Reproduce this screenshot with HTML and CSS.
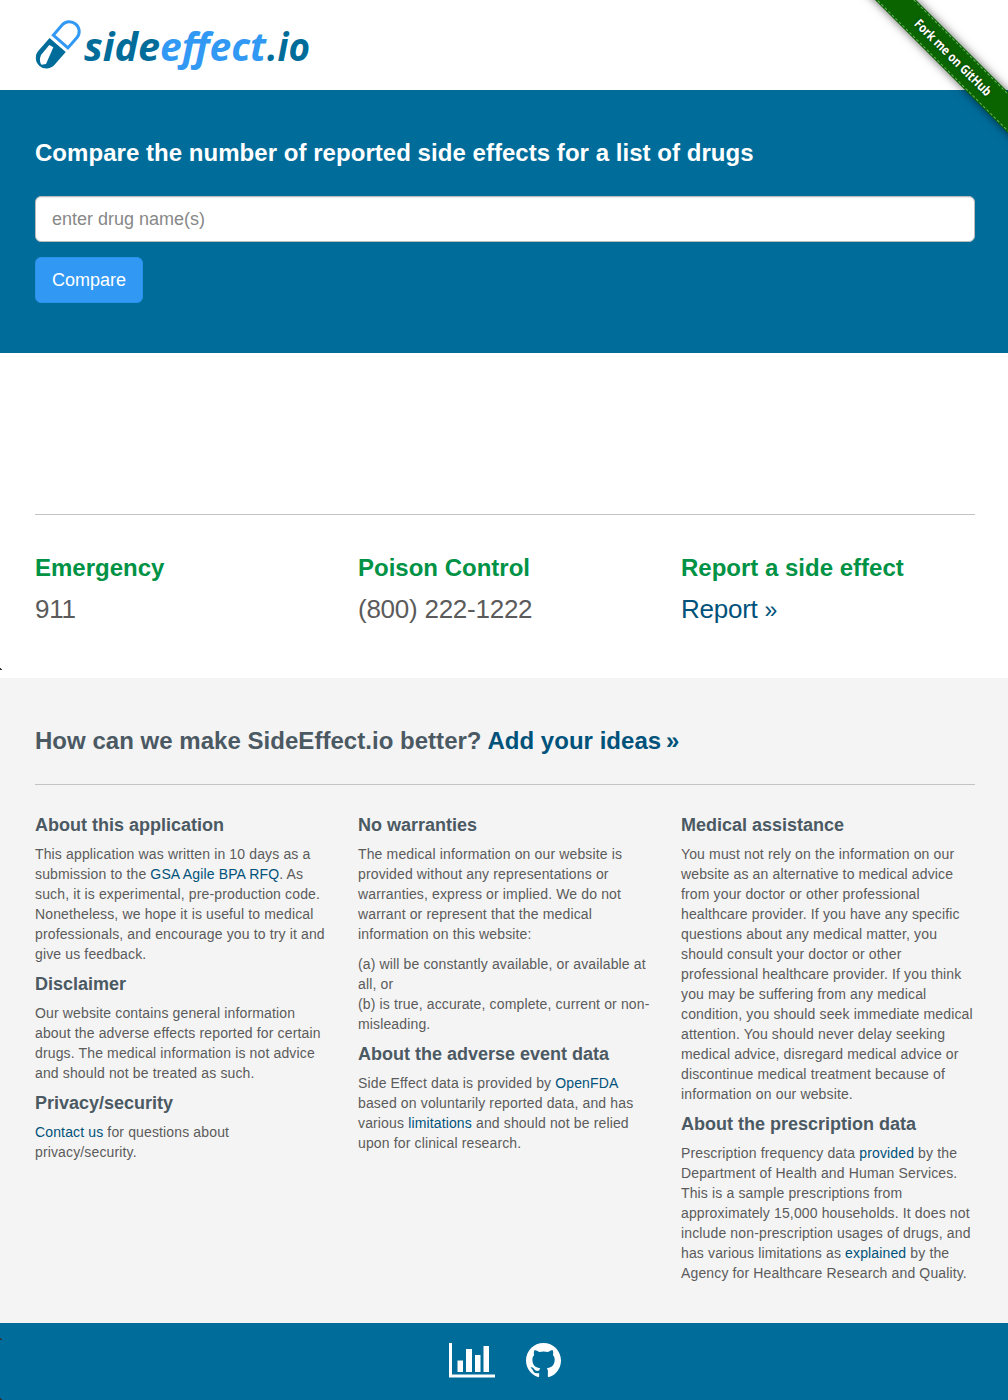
FILE: index.html
```html
<!DOCTYPE html>
<html lang="en">
<head>
<meta charset="utf-8">
<title>SideEffect.io</title>
<link rel="stylesheet" href="styles.css">
</head>
<body>
<header class="header">
  <svg class="logo" width="280" height="60" viewBox="30 15 280 60" role="img" aria-label="sideeffect.io">
    <g transform="translate(58.5 44) rotate(41)">
      <path d="M-9.700-3.200V-17a9.700 9.300 0 0 1 19.400 0V-3.200z" fill="none" stroke="#3199f4" stroke-width="3"/>
      <path d="M-10.700 1.300H10.700V18.300a10.700 10.700 0 0 1-21.400 0z" fill="#006c9a"/>
    </g>
    <path d="M49.300 45L53.300 47.300L46 64L41.500 64.700Q38.500 61 41 55z" fill="#fff"/>
    <g class="logo-text">
      <text x="84" y="61" textLength="76" lengthAdjust="spacingAndGlyphs" fill="#006c9a">side</text>
      <text x="160" y="61" textLength="106" lengthAdjust="spacingAndGlyphs" fill="#3199f4">effect</text>
      <text x="267" y="61" textLength="43" lengthAdjust="spacingAndGlyphs" fill="#006c9a">.io</text>
    </g>
  </svg>
  <div class="ribbon-clip"><a class="ribbon"><span class="stitch"><span class="ribbon-label">Fork me on GitHub</span></span></a></div>
</header>

<section class="hero">
  <h2>Compare the number of reported side effects for a list of drugs</h2>
  <input class="drug-input" type="text" placeholder="enter drug name(s)">
  <button class="compare" type="button">Compare</button>
</section>

<main class="contacts">
  <hr>
  <div class="columns">
    <div><h3>Emergency</h3><p class="lead">911</p></div>
    <div><h3>Poison Control</h3><p class="lead">(800) 222-1222</p></div>
    <div><h3>Report a side effect</h3><p class="lead"><a>Report <span class="raquo">»</span></a></p></div>
  </div>
  <i class="speck"></i>
</main>

<section class="info">
  <h3 class="ideas">How can we make SideEffect.io better? <a>Add your ideas <span class="raquo">»</span></a></h3>
  <hr>
  <div class="columns">
    <div>
      <h4>About this application</h4>
      <p>This application was written in 10 days as a<br>submission to the <a>GSA Agile BPA RFQ</a>. As<br>such, it is experimental, pre-production code.<br>Nonetheless, we hope it is useful to medical<br>professionals, and encourage you to try it and<br>give us feedback.</p>
      <h4>Disclaimer</h4>
      <p>Our website contains general information<br>about the adverse effects reported for certain<br>drugs. The medical information is not advice<br>and should not be treated as such.</p>
      <h4>Privacy/security</h4>
      <p><a>Contact us</a> for questions about<br>privacy/security.</p>
    </div>
    <div>
      <h4>No warranties</h4>
      <p>The medical information on our website is<br>provided without any representations or<br>warranties, express or implied. We do not<br>warrant or represent that the medical<br>information on this website:</p>
      <p>(a) will be constantly available, or available at<br>all, or<br>(b) is true, accurate, complete, current or non-<br>misleading.</p>
      <h4>About the adverse event data</h4>
      <p>Side Effect data is provided by <a>OpenFDA</a><br>based on voluntarily reported data, and has<br>various <a>limitations</a> and should not be relied<br>upon for clinical research.</p>
    </div>
    <div>
      <h4>Medical assistance</h4>
      <p>You must not rely on the information on our<br>website as an alternative to medical advice<br>from your doctor or other professional<br>healthcare provider. If you have any specific<br>questions about any medical matter, you<br>should consult your doctor or other<br>professional healthcare provider. If you think<br>you may be suffering from any medical<br>condition, you should seek immediate medical<br>attention. You should never delay seeking<br>medical advice, disregard medical advice or<br>discontinue medical treatment because of<br>information on our website.</p>
      <h4>About the prescription data</h4>
      <p>Prescription frequency data <a>provided</a> by the<br>Department of Health and Human Services.<br>This is a sample prescriptions from<br>approximately 15,000 households. It does not<br>include non-prescription usages of drugs, and<br>has various limitations as <a>explained</a> by the<br>Agency for Healthcare Research and Quality.</p>
    </div>
  </div>
</section>

<footer class="footer">
  <svg class="chart" width="46" height="35" viewBox="0 0 46 35" fill="#fff" aria-label="Statistics">
    <path d="M0 0h3v31.500h43V34.500H0zM8.500 17.500H14V29H8.500zM17 6h6v23h-6zM26 12h5.500v17H26zM34.500 3H40v26h-5.500z"/>
  </svg>
  <svg class="github" width="35" height="35" viewBox="0 0 16 16" fill="#fff" aria-label="GitHub">
    <path d="M8 0C3.580 0 0 3.580 0 8c0 3.540 2.290 6.530 5.470 7.590.4.070.55-.17.55-.38 0-.19-.01-.82-.01-1.490-2.010.37-2.530-.49-2.690-.94-.09-.23-.48-.94-.82-1.130-.28-.15-.68-.52-.01-.53.63-.01 1.080.58 1.230.82.72 1.210 1.870.87 2.330.66.07-.52.28-.87.51-1.070-1.780-.2-3.640-.89-3.640-3.950 0-.87.31-1.590.82-2.150-.08-.2-.36-1.020.08-2.120 0 0 .67-.21 2.200.82.64-.18 1.320-.27 2-.27s1.360.09 2 .27c1.530-1.040 2.200-.82 2.200-.82.44 1.100.16 1.920.08 2.120.51.56.82 1.270.82 2.150 0 3.070-1.870 3.750-3.650 3.950.29.25.54.73.54 1.480 0 1.070-.01 1.930-.01 2.200 0 .21.15.46.55.38A8.010 8.010 0 0 0 16 8c0-4.420-3.580-8-8-8z"/>
  </svg>
  <i class="speck speck-top"></i>
  <i class="speck speck-bottom"></i>
</footer>
</body>
</html>
```
FILE: styles.css
```css
* { box-sizing: border-box; }
body {
  margin: 0;
  background: #fff;
  color: #5b5b5b;
  font: 14px/20px "Liberation Sans", Arial, sans-serif;
  white-space: nowrap;
}
a { color: #00527a; text-decoration: none; }
h2, h3, h4 { font-weight: bold; line-height: 1.1; margin: 0; }
p { margin: 0 0 10px; }
hr { margin: 0; border: 0; border-top: 1px solid #c3c3c3; }

.header { height: 90px; padding: 15px 30px; }
.logo { display: block; overflow: visible; }
.logo-text { font: italic bold 40px "Open Sans", "Noto Sans", sans-serif; }

.ribbon-clip {
  position: absolute;
  top: 0;
  right: 0;
  width: 170px;
  height: 170px;
  overflow: hidden;
}
.ribbon {
  position: absolute;
  top: 43px;
  left: -23px;
  width: 276px;
  height: 29px;
  padding: 1px 0;
  background: #0a6400;
  color: #fff;
  box-shadow: 0 0 10px rgba(0, 0, 0, .6);
  transform: rotate(45deg);
}
.stitch {
  display: block;
  height: 27px;
  border: dashed #65b35f;
  border-width: 1px 0;
  text-align: center;
}
.ribbon-label {
  display: inline-block;
  font: bold 13px/25px "Open Sans", sans-serif;
  text-shadow: 0 0 3px rgba(0, 0, 0, .5);
  transform: scaleX(.84);
}

.hero {
  display: flex;
  flex-direction: column;
  align-items: flex-start;
  height: 263px;
  padding: 50px 33px 0 35px;
  background: #006c9a;
}
.hero h2 { color: #fff; font-size: 24px; line-height: 26px; letter-spacing: .04px; }
.drug-input {
  width: 100%;
  height: 46px;
  margin: 30px 0 15px;
  padding: 10px 16px;
  border: 1px solid #bbb;
  border-radius: 6px;
  background: #fff;
  box-shadow: inset 0 1px 1px rgba(0, 0, 0, .075);
  font: 18px/24px "Liberation Sans", Arial, sans-serif;
}
.drug-input::placeholder { color: #888; opacity: 1; }
.compare {
  width: 108px;
  height: 46px;
  padding: 0;
  border: 1px solid #2b91ea;
  border-radius: 6px;
  background: #3199f4;
  color: #fff;
  font: 18px/24px "Liberation Sans", Arial, sans-serif;
}

.columns { display: grid; grid-template-columns: repeat(3, 293px); gap: 30px; }
.contacts { position: relative; height: 325px; padding: 161px 33px 0 35px; }
.contacts .columns { padding-top: 39px; }
.contacts h3 { color: #009245; font-size: 24px; line-height: 27px; }
.lead { margin-top: 12px; font-size: 26px; line-height: 32px; letter-spacing: -.25px; }
.lead .raquo { margin-left: 0; font-size: 23px; }

.info { height: 645px; padding: 50px 33px 0 35px; background: #f4f4f4; }
.ideas { margin-bottom: 30px; color: #4b5963; font-size: 24px; line-height: 26px; letter-spacing: .03px; }
.raquo { margin-left: -2px; }
.info .columns { padding-top: 30.300px; }
.info h4 { margin-bottom: 7.900px; color: #4b5963; font-size: 18px; line-height: 21px; }
.info p { letter-spacing: .14px; }

.footer {
  position: relative;
  display: flex;
  justify-content: center;
  align-items: flex-start;
  gap: 31px;
  height: 77px;
  padding: 20px 0 0 2px;
  background: #006c9a;
}
.speck {
  position: absolute;
  left: 0;
  top: 315px;
  width: 2px;
  height: 2px;
  background: linear-gradient(#333, #333) 0 0 / 1px 1px no-repeat, linear-gradient(#333, #333) 0 1px / 2px 1px no-repeat;
}
.speck-top { top: 15px; }
.speck-bottom { top: 75px; }
```
